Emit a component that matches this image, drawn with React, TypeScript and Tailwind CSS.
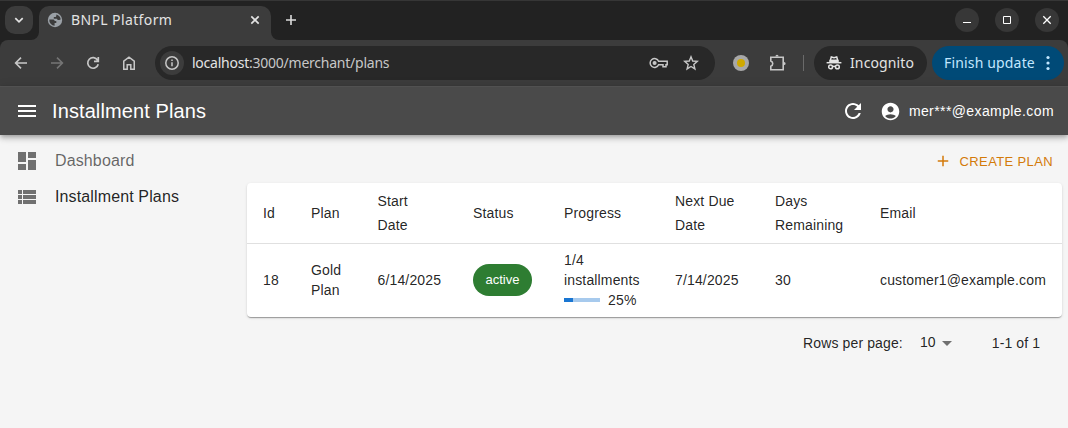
import React from "react";

type IconProps = { d: string; className?: string; viewBox?: string };

function Icon({ d, className = "size-6", viewBox = "0 0 24 24" }: IconProps) {
  return (
    <svg viewBox={viewBox} className={`shrink-0 fill-current ${className}`} aria-hidden="true">
      <path d={d} />
    </svg>
  );
}

const paths = {
  menu: "M3 18h18v-2H3zm0-5h18v-2H3zm0-7v2h18V6z",
  refresh:
    "M17.65 6.35C16.2 4.9 14.21 4 12 4c-4.42 0-7.99 3.58-7.99 8s3.57 8 7.99 8c3.73 0 6.84-2.55 7.73-6h-2.08c-.82 2.33-3.04 4-5.65 4-3.31 0-6-2.69-6-6s2.69-6 6-6c1.66 0 3.14.69 4.22 1.78L13 11h7V4z",
  account:
    "M12 2C6.48 2 2 6.48 2 12s4.48 10 10 10 10-4.48 10-10S17.52 2 12 2m0 4c1.93 0 3.5 1.57 3.5 3.5S13.93 13 12 13s-3.5-1.57-3.5-3.5S10.07 6 12 6m0 14c-2.03 0-4.43-.82-6.14-2.88C7.55 15.8 9.68 15 12 15s4.45.8 6.14 2.12C16.43 19.18 14.03 20 12 20",
  dashboard: "M3 13h8V3H3zm0 8h8v-6H3zm10 0h8V11h-8zm0-18v6h8V3z",
  list: "M3 14h4v-4H3zm0 5h4v-4H3zM3 9h4V5H3zm5 5h13v-4H8zm0 5h13v-4H8zM8 5v4h13V5z",
  add: "M19 13h-6v6h-2v-6H5v-2h6V5h2v6h6z",
  dropDown: "m7 10 5 5 5-5z",
};

function TabStrip() {
  return (
    <div className="flex h-10 items-start border-t border-[#363636] bg-[#222222] pl-[5px]">
      <div className="mt-[5px] flex size-7 items-center justify-center rounded-[10px] bg-[#3c3c3c] text-[#e3e3e3]">
        <svg viewBox="0 0 10 10" className="size-[10px] fill-none stroke-current stroke-[1.7]">
          <path d="M1.3 3.2 5 6.9 8.7 3.2" />
        </svg>
      </div>
      <svg viewBox="0 0 8 8" className="ml-[-2px] size-2 self-end fill-[#3c3c3c]">
        <path d="M8 0v8H0a8 8 0 0 0 8-8" />
      </svg>
      <div className="mt-[5px] flex h-[34px] w-[232px] items-center rounded-t-[10px] bg-[#3c3c3c] pr-[9px] pb-[6px] pl-2">
        <svg viewBox="0 0 16 16" className="size-4">
          <circle cx="8" cy="8" r="7.2" fill="#9aa0a6" />
          <path
            d="M2.3 7.4h3.4c1.3 0 2 .7 2 1.7h1.6v1.9H7.6v2.7A5.8 5.8 0 0 1 2.3 7.4M9.3 2.4v1.3c0 .8-.6 1.3-1.3 1.3H6.8v1.7h2.4c1 0 1.4.7 1.4 1.4h1.6c.7 0 1.1-.3 1.5-.8A5.8 5.8 0 0 0 9.3 2.4"
            fill="#3c3c3c"
          />
        </svg>
        <span className="ml-2 grow font-['Noto_Sans',sans-serif] text-[14px] leading-5 tracking-[0.38px] whitespace-nowrap text-[#e3e3e3]">
          BNPL Platform
        </span>
        <svg viewBox="0 0 10 10" className="mr-[2px] size-[10px] fill-none stroke-[#e3e3e3] stroke-[1.7]">
          <path d="m1.3 1.3 7.4 7.4m0-7.4L1.3 8.7" />
        </svg>
      </div>
      <svg viewBox="0 0 8 8" className="size-2 self-end fill-[#3c3c3c]">
        <path d="M0 0v8h8a8 8 0 0 1-8-8" />
      </svg>
      <svg viewBox="0 0 12 12" className="mt-[13px] ml-[6px] size-3 fill-none stroke-[#dcdcdc] stroke-[1.6]">
        <path d="M6 1v10M1 6h10" />
      </svg>
      <div className="mt-[7px] mr-[9px] ml-auto flex gap-4 text-white">
        <div className="flex size-6 items-center justify-center rounded-full bg-[#373737]">
          <svg viewBox="0 0 16 16" className="size-4 fill-none stroke-current">
            <path d="M4 10.5h8" />
          </svg>
        </div>
        <div className="flex size-6 items-center justify-center rounded-full bg-[#373737]">
          <svg viewBox="0 0 16 16" className="size-4 fill-none stroke-current">
            <path d="M4.5 4.5h7v7h-7z" />
          </svg>
        </div>
        <div className="flex size-6 items-center justify-center rounded-full bg-[#373737]">
          <svg viewBox="0 0 16 16" className="size-4 fill-none stroke-current stroke-[1.3]">
            <path d="m4.3 4.3 7.4 7.4m0-7.4-7.4 7.4" />
          </svg>
        </div>
      </div>
    </div>
  );
}

function Toolbar() {
  return (
    <div className="bg-[#222222]">
      <div className="flex h-[46px] items-center rounded-t-[8px] bg-[#3c3c3c] pr-1 pl-[13px] font-['Noto_Sans',sans-serif] text-[#c7c7c7]">
        <svg viewBox="0 0 16 16" className="size-4 fill-none stroke-current stroke-[1.6]">
          <path d="M14 8H3M8 2.6 2.6 8 8 13.4" />
        </svg>
        <svg viewBox="0 0 16 16" className="ml-5 size-4 fill-none stroke-[#757575] stroke-[1.6]">
          <path d="M2 8h11M8 2.6 13.4 8 8 13.4" />
        </svg>
        <svg viewBox="0 0 16 16" className="ml-5 size-4 fill-none stroke-current stroke-[1.7]">
          <path d="M13.2 9.2A5.3 5.3 0 1 1 12.6 5.2L13 6M13.3 2.1v4.2H9" />
        </svg>
        <svg viewBox="0 0 16 16" className="ml-5 size-4 fill-none stroke-current stroke-[1.5]">
          <path d="M2.75 6.2 8 2.1l5.25 4.1v8.05H9.8v-4.4H6.2v4.4H2.75z" />
        </svg>
        <div className="ml-[18px] flex h-[34px] w-[560px] items-center rounded-full bg-[#282828] pr-4 pl-[5px]">
          <div className="flex size-6 items-center justify-center rounded-full bg-[#3c3c3c]">
            <svg viewBox="0 0 16 16" className="size-4 fill-none stroke-current stroke-[1.5]">
              <circle cx="8" cy="8" r="6.2" />
              <path d="M8 7.2v4M8 4.6v1.5" />
            </svg>
          </div>
          <span className="ml-2 grow text-[14px] leading-5 tracking-[-0.24px] whitespace-nowrap">
            <span className="text-[#e3e3e3]">localhost</span>:3000/merchant/plans
          </span>
          <svg viewBox="0 0 20 12" className="h-3 w-5 fill-none stroke-current stroke-[1.5]">
            <path d="M9.6 4.3h8.6v3.4h-1.2v2h-3v-2H9.6a4.4 4.4 0 1 1 0-3.4z" />
            <circle cx="5.6" cy="6" r="1.3" className="fill-current" />
          </svg>
          <svg viewBox="0 0 16 16" className="ml-[14px] size-4 fill-none stroke-current stroke-[1.4]">
            <path d="m8 1.8 1.7 4.2 4.6.4-3.5 3 1.1 4.5L8 11.5l-3.9 2.4 1.1-4.5-3.5-3 4.6-.4z" />
          </svg>
        </div>
        <div className="ml-[18px] flex size-4 items-center justify-center rounded-full bg-[#a8a8a8]">
          <div className="size-2 rounded-full bg-[#cfa900]" />
        </div>
        <svg viewBox="0 0 18 18" className="ml-[19px] size-[18px] fill-none stroke-current stroke-[1.6]">
          <path d="M2.8 3.3h12.4v12.4H2.8v-3.4c2.6-.9 2.6-4.6 0-5.4z" />
          <path d="M7.4 2.4a1.6 1.6 0 0 1 3.2 0zM16 7.9a1.6 1.6 0 0 1 0 3.2z" className="fill-current stroke-none" />
        </svg>
        <div className="ml-[17px] h-4 w-px bg-[#6a6a6a]" />
        <div className="ml-[10px] flex h-[34px] w-[113px] items-center rounded-full bg-[#282828] pl-3 text-[14px] text-[#e3e3e3]">
          <svg viewBox="0 0 16 16" className="size-4 fill-none stroke-current stroke-[1.5]">
            <path d="M4.2 5.6 5.3 2 8 2.7l2.7-.7 1.1 3.6z" />
            <path d="M3.6 4.8h8.8l.5 2.6H3.1z" className="fill-current stroke-none" />
            <path d="M.6 7.7h14.8" />
            <circle cx="4.6" cy="11.9" r="1.9" />
            <circle cx="11.4" cy="11.9" r="1.9" />
            <path d="M6.5 11.6q1.5-.8 3 0" />
          </svg>
          <span className="ml-2 leading-5 tracking-[0.12px] whitespace-nowrap">Incognito</span>
        </div>
        <div className="ml-[5px] flex h-[34px] w-[132px] items-center rounded-full bg-[#004a77] pl-3 text-[14px] text-[#c2e7ff]">
          <span className="w-[92px] leading-5 tracking-[0.16px] whitespace-nowrap">Finish update</span>
          <svg viewBox="0 0 4 16" className="ml-[10px] h-4 w-1 fill-current">
            <circle cx="2" cy="2.5" r="1.6" />
            <circle cx="2" cy="8" r="1.6" />
            <circle cx="2" cy="13.5" r="1.6" />
          </svg>
        </div>
      </div>
    </div>
  );
}

function AppBar() {
  return (
    <header className="relative flex h-[49px] items-center border-t border-[#515151] bg-[#4a4a4a] pr-[14px] pl-[15px] text-white shadow-[0_2px_4px_-1px_rgba(0,0,0,0.2),0_4px_5px_0_rgba(0,0,0,0.14),0_1px_10px_0_rgba(0,0,0,0.12)]">
      <Icon d={paths.menu} />
      <h1 className="ml-[13px] grow text-[20px] leading-8 tracking-[0.1px]">Installment Plans</h1>
      <Icon d={paths.refresh} />
      <Icon d={paths.account} className="ml-[15px] size-[21px]" />
      <span className="ml-[8px] text-[14px] leading-6 tracking-[0.4px]">mer***@example.com</span>
    </header>
  );
}

function Sidebar() {
  return (
    <nav className="w-[247px] shrink-0 pt-2 text-base tracking-[0.13px]">
      <a className="flex h-9 items-center pl-[15px] text-black/60">
        <Icon d={paths.dashboard} className="size-6 text-black/54" />
        <span className="ml-4">Dashboard</span>
      </a>
      <a className="flex h-9 items-center pl-[15px] text-black/87">
        <Icon d={paths.list} className="size-6 text-black/54" />
        <span className="ml-4">Installment Plans</span>
      </a>
    </nav>
  );
}

const columns = ["Id", "Plan", "Start Date", "Status", "Progress", "Next Due Date", "Days Remaining", "Email"];

function PlansTable() {
  const paid = 1;
  const total = 4;
  return (
    <div className="h-[134px] rounded bg-white shadow-[0_2px_1px_-1px_rgba(0,0,0,0.2),0_1px_1px_0_rgba(0,0,0,0.14),0_1px_3px_0_rgba(0,0,0,0.12)]">
      <table className="w-[815px] table-fixed border-separate border-spacing-0 text-left text-[14px] tracking-[0.15px] text-black/87">
        <colgroup>
          <col className="w-12" />
          <col className="w-[66.5px]" />
          <col className="w-[95.5px]" />
          <col className="w-[91px]" />
          <col className="w-[111px]" />
          <col className="w-[100px]" />
          <col className="w-[105px]" />
          <col className="w-[198px]" />
        </colgroup>
        <thead>
          <tr>
            {columns.map((name) => (
              <th key={name} className="h-[61px] border-b border-[#e0e0e0] px-4 py-[6px] leading-6 font-normal">
                {name}
              </th>
            ))}
          </tr>
        </thead>
        <tbody>
          <tr className="h-[72px] leading-5">
            <td className="px-4">18</td>
            <td className="px-4">Gold Plan</td>
            <td className="px-4">6/14/2025</td>
            <td className="px-4">
              <span className="flex h-8 w-[59px] items-center justify-center rounded-2xl bg-[#2e7d32] text-[13px] tracking-normal text-white">
                active
              </span>
            </td>
            <td className="px-4">
              <div>
                {paid}/{total} installments
              </div>
              <div className="flex items-center gap-2">
                <div className="h-1 w-9 bg-[#a7caed]">
                  <div className="h-1 bg-[#1976d2]" style={{ width: `${(paid / total) * 100}%` }} />
                </div>
                <span>{(paid / total) * 100}%</span>
              </div>
            </td>
            <td className="px-4">7/14/2025</td>
            <td className="px-4">30</td>
            <td className="px-4">customer1@example.com</td>
          </tr>
        </tbody>
      </table>
    </div>
  );
}

export default function App() {
  return (
    <div className="flex h-[428px] w-[1068px] flex-col overflow-hidden bg-[#f5f5f5] font-['Liberation_Sans',Arial,sans-serif]">
      <TabStrip />
      <Toolbar />
      <AppBar />
      <div className="flex grow">
        <Sidebar />
        <main className="w-[815px]">
          <div className="flex h-12 items-center justify-end pt-1 pr-[9px] text-[13px] tracking-[0.37px] text-[#d37a0a]">
            <Icon d={paths.add} className="size-[18px]" />
            <span className="ml-2 pt-px">CREATE PLAN</span>
          </div>
          <PlansTable />
          <div className="flex h-[52px] items-center pl-[556px] text-[14px] tracking-[0.13px] text-black/87">
            <span>Rows per page:</span>
            <span className="ml-[17px] pb-[2px]">10</span>
            <Icon d={paths.dropDown} className="-ml-px size-6 text-black/54" />
            <span className="ml-[33px]">1-1 of 1</span>
          </div>
        </main>
      </div>
    </div>
  );
}
